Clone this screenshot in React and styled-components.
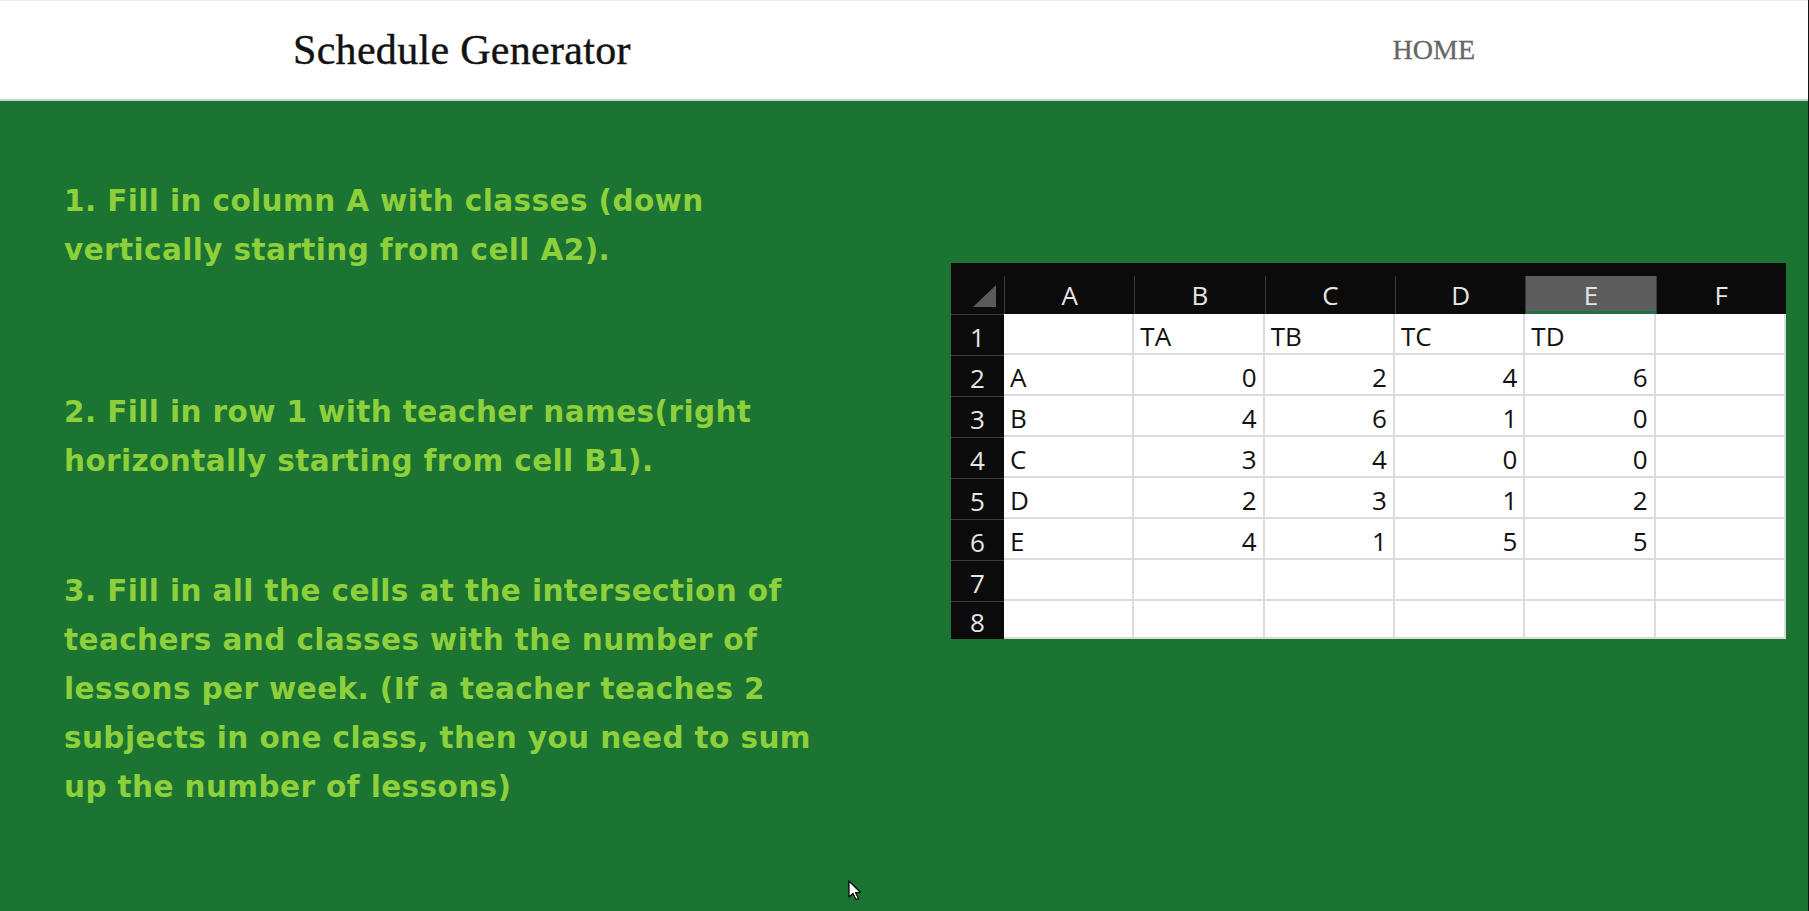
import React from 'react';
import styled, { createGlobalStyle } from 'styled-components';

const GlobalStyle = createGlobalStyle`
  html, body {
    margin: 0;
    padding: 0;
  }
  body {
    background: #1b7431;
  }
`;

const Page = styled.div`
  position: relative;
  min-height: 911px;
  background: #1b7431;
  border-right: 1px solid #141414;
  box-sizing: border-box;
  overflow: hidden;
`;

const Nav = styled.header`
  height: 101px;
  box-sizing: border-box;
  background: #fff;
  border-top: 1px solid #ececec;
  border-bottom: 2px solid #c7d2c7;
  display: flex;
  align-items: center;
  justify-content: space-between;
  padding: 0 333px 0 293px;
`;

const Brand = styled.div`
  font-family: 'Liberation Serif', serif;
  font-size: 42px;
  color: #121212;
  letter-spacing: 0.3px;
  -webkit-text-stroke: 0.4px #121212;
`;

const NavLink = styled.a`
  font-family: 'Liberation Serif', serif;
  font-size: 28px;
  color: #666;
  text-decoration: none;
  cursor: pointer;
  -webkit-text-stroke: 0.3px #666;
`;

const Main = styled.main`
  display: flex;
  justify-content: space-between;
  align-items: flex-start;
  padding: 0 22px 0 64px;
`;

const Steps = styled.div`
  width: 820px;
  padding-top: 76px;
`;

const Step = styled.p`
  margin: ${(p) => p.$gap || 0}px 0 0;
  font-family: 'DejaVu Sans', sans-serif;
  font-weight: bold;
  font-size: 29.5px;
  line-height: 49px;
  letter-spacing: 0.4px;
  color: #8dd03c;
`;

const Sheet = styled.div`
  margin-top: 162px;
  width: 835px;
  box-sizing: border-box;
  padding-top: 13px;
  background: #0b0b0b;
  display: grid;
  grid-template-columns: 53px repeat(6, 1fr);
  grid-template-rows: 38px repeat(7, 41px) 38px;
  font-family: 'Liberation Sans Narrow', 'Open Sans', sans-serif;
  font-stretch: 90%;
  font-size: 26px;
`;

const Corner = styled.div`
  display: flex;
  align-items: flex-end;
  justify-content: flex-end;
  padding: 0 8px 7px 0;
`;

const ColHead = styled.div`
  display: flex;
  align-items: center;
  justify-content: center;
  color: #e6e6e6;
  border-left: 1px solid #3a3a3a;
  background: ${(p) => (p.$active ? '#5d5d5d' : 'transparent')};
  box-shadow: ${(p) => (p.$active ? 'inset 0 -3px 0 #1f7244' : 'none')};
`;

const RowHead = styled.div`
  display: flex;
  align-items: center;
  justify-content: center;
  padding-top: 3px;
  color: #e6e6e6;
  border-top: 1px solid #3c3c3c;
`;

const Cell = styled.div`
  display: flex;
  align-items: center;
  justify-content: ${(p) => (p.$num ? 'flex-end' : 'flex-start')};
  padding: 4px 6px 0;
  background: #fff;
  color: #111;
  border-right: 2px solid #dcdcdc;
  border-bottom: 2px solid #dcdcdc;
`;

const Cursor = styled.svg`
  position: absolute;
  left: 848px;
  top: 880px;
`;

const columns = ['A', 'B', 'C', 'D', 'E', 'F'];

const rows = [
  ['', 'TA', 'TB', 'TC', 'TD', ''],
  ['A', 0, 2, 4, 6, ''],
  ['B', 4, 6, 1, 0, ''],
  ['C', 3, 4, 0, 0, ''],
  ['D', 2, 3, 1, 2, ''],
  ['E', 4, 1, 5, 5, ''],
  ['', '', '', '', '', ''],
  ['', '', '', '', '', ''],
];

const App = () => {
  return (
    <Page>
      <GlobalStyle />
      <Nav>
        <Brand>Schedule Generator</Brand>
        <NavLink>HOME</NavLink>
      </Nav>
      <Main>
        <Steps>
          <Step>
            1. Fill in column A with classes (down
            <br />
            vertically starting from cell A2).
          </Step>
          <Step $gap={113}>
            2. Fill in row 1 with teacher names(right
            <br />
            horizontally starting from cell B1).
          </Step>
          <Step $gap={81}>
            3. Fill in all the cells at the intersection of
            <br />
            teachers and classes with the number of
            <br />
            lessons per week. (If a teacher teaches 2
            <br />
            subjects in one class, then you need to sum
            <br />
            up the number of lessons)
          </Step>
        </Steps>

        <Sheet>
          <Corner>
            <svg width="23" height="22" viewBox="0 0 23 22">
              <polygon points="23,0 23,22 0,22" fill="#5a5a5a" />
            </svg>
          </Corner>
          {columns.map((c) => (
            <ColHead key={c} $active={c === 'E'}>
              {c}
            </ColHead>
          ))}
          {rows.map((row, i) => (
            <React.Fragment key={i}>
              <RowHead>{i + 1}</RowHead>
              {row.map((v, j) => (
                <Cell key={j} $num={typeof v === 'number'}>
                  {v}
                </Cell>
              ))}
            </React.Fragment>
          ))}
        </Sheet>
      </Main>

      <Cursor width="14" height="21" viewBox="0 0 14 21">
        <path
          d="M1 1 L1 17 L5 13.5 L8 19.5 L10.5 18.5 L7.5 12.5 L12.5 12.5 Z"
          fill="#fff"
          stroke="#000"
          strokeWidth="1.2"
          strokeLinejoin="round"
        />
      </Cursor>
    </Page>
  );
};

export default App;
